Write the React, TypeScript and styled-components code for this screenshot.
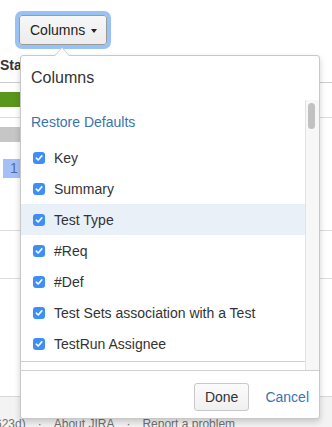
import React from "react";
import styled, { createGlobalStyle } from "styled-components";

const GlobalStyle = createGlobalStyle`
  html, body { margin: 0; padding: 0; background: #fff; }
  body { font-family: "Liberation Sans", Arial, sans-serif; color: #333; }
  * { box-sizing: border-box; }
`;

const Page = styled.div`
  position: relative;
  width: 332px;
  height: 427px;
  overflow: hidden;
  display: flex;
  flex-direction: column;
  background: #fff;
`;

const Toolbar = styled.div`
  display: flex;
  padding: 15px 0 0 19px;
`;

const ColumnsButton = styled.button`
  display: flex;
  align-items: center;
  gap: 6px;
  height: 30px;
  padding: 4px 9px 4px 10px;
  border: 1px solid #9a9a9a;
  border-radius: 3px;
  background: linear-gradient(#f7f7f7, #ececec);
  box-shadow: 0 0 0 4px #98c2f4;
  font: 14px/20px "Liberation Sans", Arial, sans-serif;
  color: #222;
`;

const Caret = styled.span`
  width: 0;
  height: 0;
  border-left: 3.5px solid transparent;
  border-right: 3.5px solid transparent;
  border-top: 4px solid #222;
  margin-top: 1px;
`;

const Table = styled.div`
  display: flex;
  flex-direction: column;
`;

const HeaderCell = styled.div`
  padding: 10px 0 7px 0;
  font: bold 14px/20px "Liberation Sans", Arial, sans-serif;
  color: #333;
  border-bottom: 1px solid #ccc;
`;

const Row = styled.div<{ $pt: number; $pb: number }>`
  display: flex;
  flex-direction: column;
  padding-top: ${(p) => p.$pt}px;
  padding-bottom: ${(p) => p.$pb}px;
  border-bottom: 1px solid #dcdcdc;
`;

const Bar = styled.div<{ $color: string }>`
  height: 15px;
  width: 120px;
  background: ${(p) => p.$color};
`;

const CountCell = styled.div`
  margin: 17px 0 0 3px;
  width: 40px;
  height: 19px;
  padding-left: 7px;
  background: #a5c0f6;
  color: #4a6cae;
  font: 14px/19px "Liberation Sans", Arial, sans-serif;
`;

const Spacer = styled.div`
  flex: 1;
`;

const PageFooter = styled.div`
  height: 31px;
  flex: none;
  border-top: 1px solid #d8d8d8;
  background: #f3f3f3;
  padding-top: 19px;
  font: 12px/16px "Liberation Sans", Arial, sans-serif;
  color: #707070;
  white-space: nowrap;
  display: flex;
`;

const FooterText = styled.span`
  margin-left: -5px;
`;

const Dot = styled.span`
  margin: 0 12px;
`;

const Popup = styled.div`
  position: absolute;
  left: 20px;
  top: 55px;
  width: 300px;
  height: 364px;
  background: #fff;
  border: 1px solid #c8c8c8;
  border-radius: 3px;
  box-shadow: 0 3px 6px rgba(0, 0, 0, 0.18);
  display: flex;
  flex-direction: column;

  &::before {
    content: "";
    position: absolute;
    top: -9px;
    left: 33px;
    border-left: 8px solid transparent;
    border-right: 8px solid transparent;
    border-bottom: 9px solid #c8c8c8;
  }
  &::after {
    content: "";
    position: absolute;
    top: -8px;
    left: 34px;
    border-left: 7px solid transparent;
    border-right: 7px solid transparent;
    border-bottom: 8px solid #fff;
  }
`;

const PopupTitle = styled.div`
  padding: 12px 10px;
  font: 16px/20px "Liberation Sans", Arial, sans-serif;
  color: #333;
`;

const ScrollBody = styled.div`
  display: flex;
  height: 270px;
  flex: none;
`;

const List = styled.div`
  flex: 1;
  overflow: hidden;
  display: flex;
  flex-direction: column;
`;

const RestoreLink = styled.a`
  display: block;
  padding: 12px 10px 10px;
  font: 14px/20px "Liberation Sans", Arial, sans-serif;
  color: #3b73af;
  text-decoration: none;
`;

const OptionRow = styled.label<{ $active?: boolean }>`
  display: flex;
  align-items: center;
  gap: 9px;
  height: 31px;
  flex: none;
  padding-left: 12px;
  background: ${(p) => (p.$active ? "#e9f0f8" : "transparent")};
  font: 14px/20px "Liberation Sans", Arial, sans-serif;
  color: #333;
  white-space: nowrap;
`;

const Check = styled.span`
  width: 12px;
  height: 12px;
  border-radius: 3px;
  background: #3d8ef6;
  display: flex;
  align-items: center;
  justify-content: center;
  flex: none;
  margin-top: 1px;
`;

const ListDivider = styled.div`
  margin-top: 2px;
  height: 1px;
  flex: none;
  background: #cfcfcf;
`;

const Track = styled.div`
  width: 14px;
  flex: none;
  border-left: 1px solid #e3e3e3;
  background: #f7f7f7;
  padding: 3px 0 0 2px;
`;

const Thumb = styled.div`
  width: 7px;
  height: 26px;
  border-radius: 4px;
  background: #c1c1c1;
`;

const PopupFooter = styled.div`
  flex: 1;
  border-top: 1px solid #d0d0d0;
  display: flex;
  justify-content: flex-end;
  align-items: flex-start;
  gap: 16px;
  padding: 12px 10px 0;
`;

const DoneButton = styled.button`
  height: 28px;
  padding: 3px 10px;
  border: 1px solid #c8c8c8;
  border-radius: 3px;
  background: linear-gradient(#fbfbfb, #f0f0f0);
  font: 14px/20px "Liberation Sans", Arial, sans-serif;
  color: #333;
`;

const CancelLink = styled.a`
  font: 14px/28px "Liberation Sans", Arial, sans-serif;
  color: #3b73af;
  text-decoration: none;
`;

const CheckIcon = () => (
  <svg width="8" height="8" viewBox="0 0 8 8">
    <path d="M1.3 4.2 L3.2 6 L6.8 1.9" fill="none" stroke="#fff" strokeWidth="1.6" strokeLinecap="round" strokeLinejoin="round" />
  </svg>
);

const options = [
  "Key",
  "Summary",
  "Test Type",
  "#Req",
  "#Def",
  "Test Sets association with a Test",
  "TestRun Assignee",
];

export default function App() {
  return (
    <>
      <GlobalStyle />
      <Page>
        <Toolbar>
          <ColumnsButton>
            Columns <Caret />
          </ColumnsButton>
        </Toolbar>
        <Table>
          <HeaderCell>Status</HeaderCell>
          <Row $pt={9} $pb={10}>
            <Bar $color="#5b961c" />
          </Row>
          <Row $pt={9} $pb={52}>
            <Bar $color="#c6c6c6" />
            <CountCell>1</CountCell>
          </Row>
          <Row $pt={47} $pb={0} />
        </Table>
        <Spacer />
        <PageFooter>
          <FooterText>623d)</FooterText>
          <Dot>·</Dot>
          <span>About JIRA</span>
          <Dot>·</Dot>
          <span>Report a problem</span>
        </PageFooter>

        <Popup>
          <PopupTitle>Columns</PopupTitle>
          <ScrollBody>
            <List>
              <RestoreLink href="#">Restore Defaults</RestoreLink>
              {options.map((o) => (
                <OptionRow key={o} $active={o === "Test Type"}>
                  <Check>
                    <CheckIcon />
                  </Check>
                  {o}
                </OptionRow>
              ))}
              <ListDivider />
            </List>
            <Track>
              <Thumb />
            </Track>
          </ScrollBody>
          <PopupFooter>
            <DoneButton>Done</DoneButton>
            <CancelLink href="#">Cancel</CancelLink>
          </PopupFooter>
        </Popup>
      </Page>
    </>
  );
}
